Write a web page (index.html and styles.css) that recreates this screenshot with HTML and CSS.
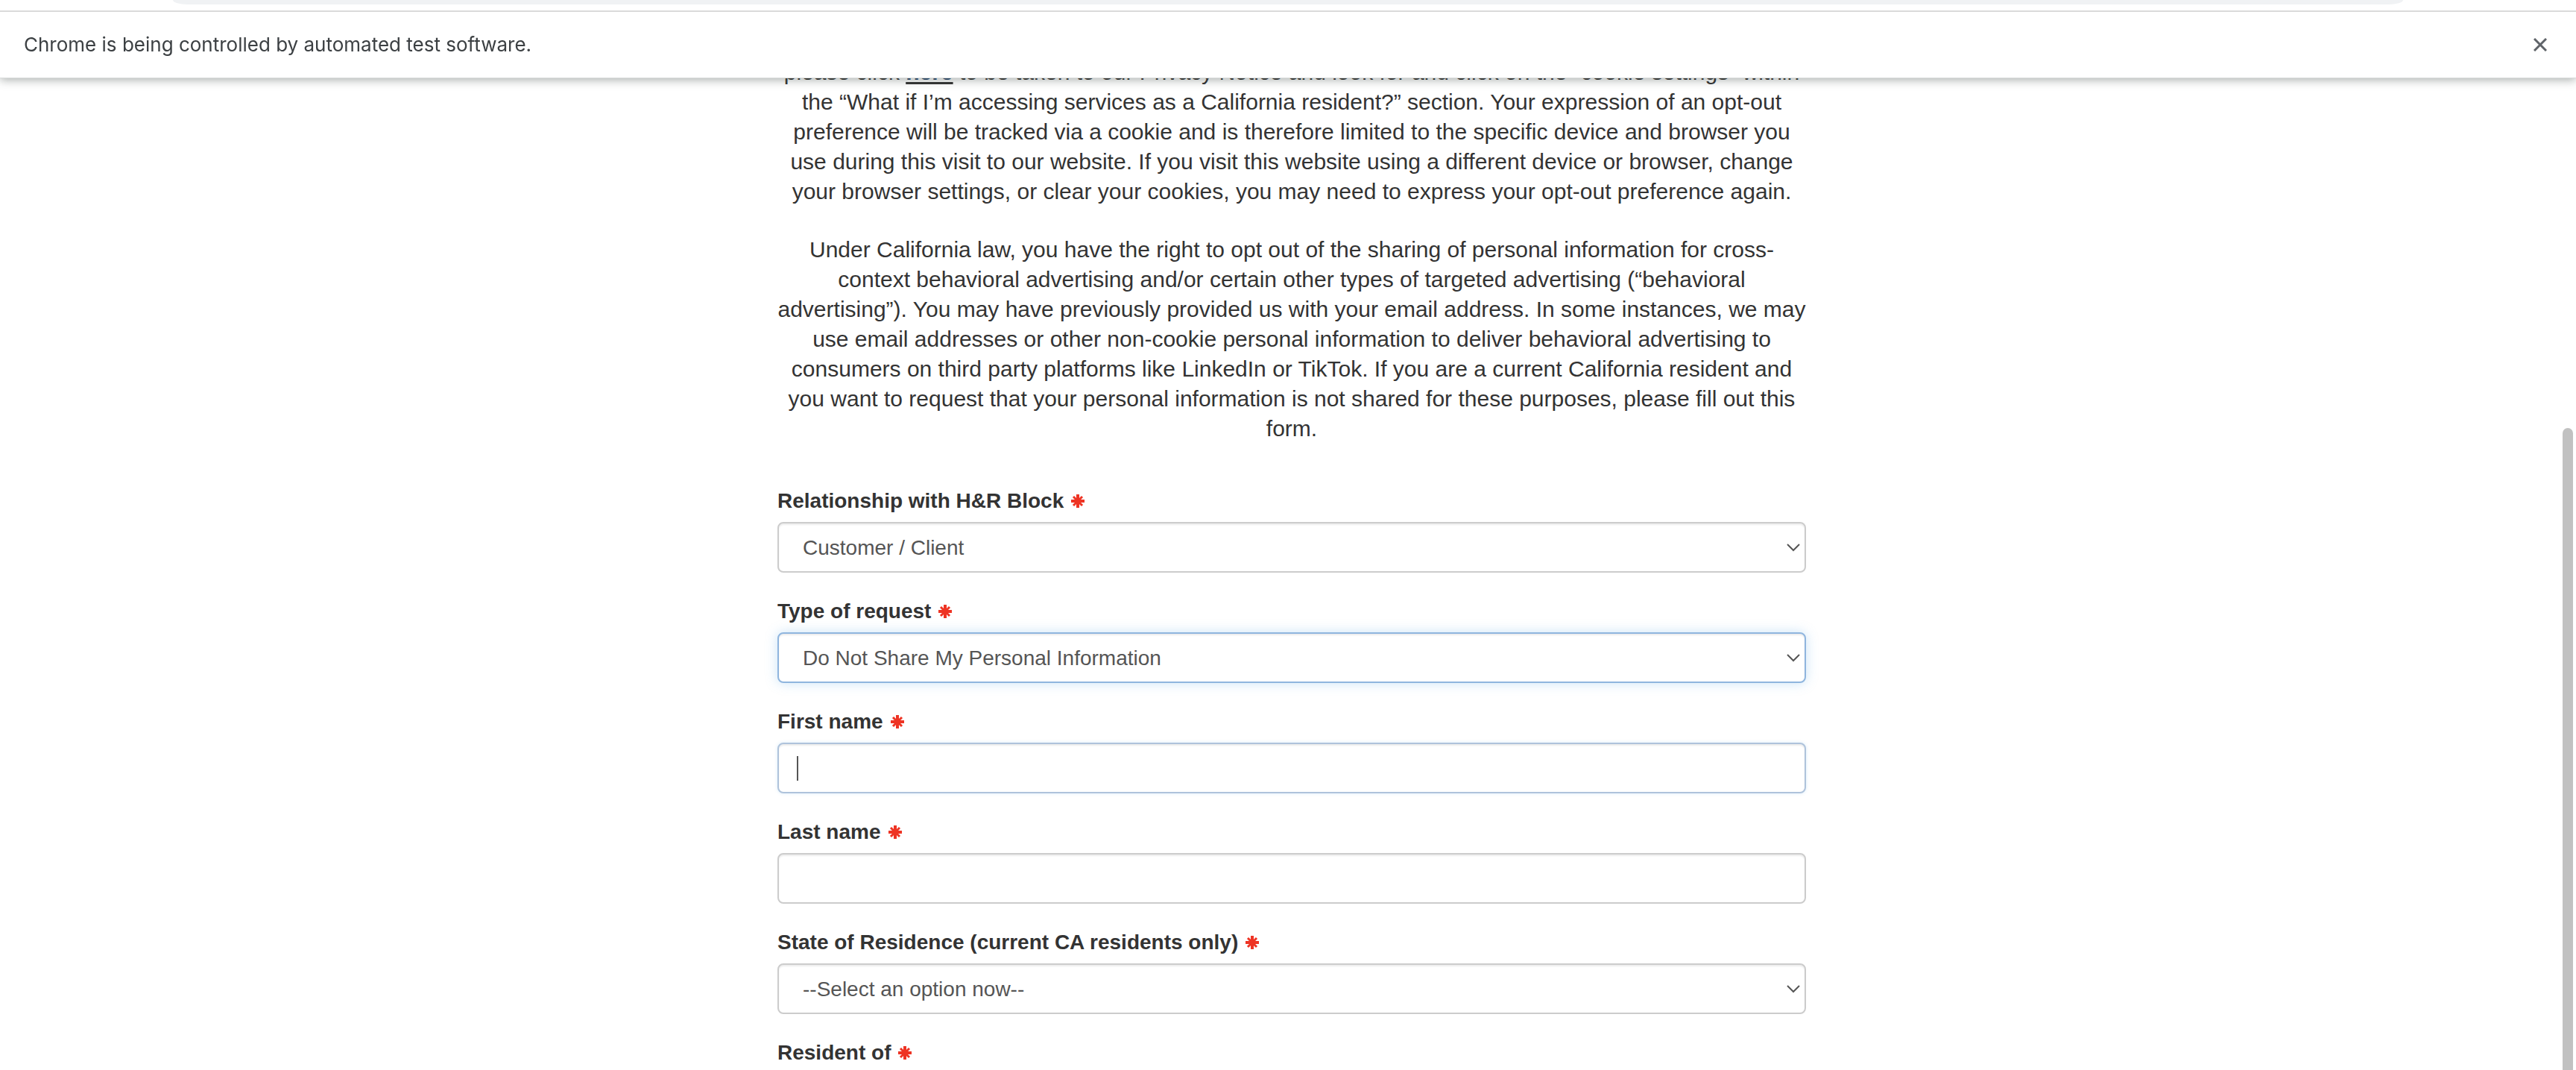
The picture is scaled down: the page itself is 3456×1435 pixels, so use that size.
FILE: index.html
```html
<!DOCTYPE html>
<html lang="en">
<head>
<meta charset="utf-8">
<title>Privacy request</title>
<link rel="stylesheet" href="styles.css">
</head>
<body>
<svg class="symbols" aria-hidden="true">
  <symbol id="required" viewBox="0 0 18 18">
    <path d="M9 0V18M0 9H18" fill="none" stroke="#ee3424" stroke-width="4"/>
    <path d="M3 3L15 15M15 3L3 15" fill="none" stroke="#ee3424" stroke-width="3"/>
  </symbol>
  <symbol id="chevron" viewBox="0 0 18 11">
    <path d="M1 1L9 9L17 1" fill="none" stroke="#555" stroke-width="2"/>
  </symbol>
</svg>
<header class="browser">
  <div class="toolbar"><div class="address"></div></div>
  <div class="infobar">
    <span>Chrome is being controlled by automated test software.</span>
    <button class="close" type="button" aria-label="Close">
      <svg width="18" height="18" viewBox="0 0 18 18"><path d="M1 1L17 17M17 1L1 17" fill="none" stroke="#5f6368" stroke-width="3"/></svg>
    </button>
  </div>
</header>
<main class="page">
  <div class="content">
    <p>please click <a class="link" href="#notice">here</a> to be taken to our Privacy Notice and look for and click on the “cookie settings” within<br>the “What if I’m accessing services as a California resident?” section. Your expression of an opt-out<br>preference will be tracked via a cookie and is therefore limited to the specific device and browser you<br>use during this visit to our website. If you visit this website using a different device or browser, change<br>your browser settings, or clear your cookies, you may need to express your opt-out preference again.</p>
    <p>Under California law, you have the right to opt out of the sharing of personal information for cross-<br>context behavioral advertising and/or certain other types of targeted advertising (“behavioral<br>advertising”). You may have previously provided us with your email address. In some instances, we may<br>use email addresses or other non-cookie personal information to deliver behavioral advertising to<br>consumers on third party platforms like LinkedIn or TikTok. If you are a current California resident and<br>you want to request that your personal information is not shared for these purposes, please fill out this<br>form.</p>
    <form class="form">
      <div class="field">
        <label for="relationship">Relationship with H&amp;R Block <svg class="required"><use href="#required"/></svg></label>
        <div class="select">
          <select class="control" id="relationship"><option>Customer / Client</option></select>
          <svg class="chevron"><use href="#chevron"/></svg>
        </div>
      </div>
      <div class="field">
        <label for="request">Type of request <svg class="required"><use href="#required"/></svg></label>
        <div class="select">
          <select class="control control-active" id="request"><option>Do Not Share My Personal Information</option></select>
          <svg class="chevron"><use href="#chevron"/></svg>
        </div>
      </div>
      <div class="field">
        <label for="first">First name <svg class="required"><use href="#required"/></svg></label>
        <input class="control control-caret" id="first" type="text">
      </div>
      <div class="field">
        <label for="last">Last name <svg class="required"><use href="#required"/></svg></label>
        <input class="control" id="last" type="text">
      </div>
      <div class="field">
        <label for="state">State of Residence (current CA residents only) <svg class="required"><use href="#required"/></svg></label>
        <div class="select">
          <select class="control" id="state"><option>--Select an option now--</option></select>
          <svg class="chevron"><use href="#chevron"/></svg>
        </div>
      </div>
      <div class="field">
        <label for="resident">Resident of <svg class="required"><use href="#required"/></svg></label>
        <input class="control" id="resident" type="text">
      </div>
    </form>
  </div>
</main>
<div class="scroll-thumb"></div>
</body>
</html>
```
FILE: styles.css
```css
* { box-sizing: border-box; }

body {
  margin: 0;
  height: 100vh;
  overflow: hidden;
  background: #fff;
  color: #333;
  font-family: "Helvetica Neue", Helvetica, "Liberation Sans", Arial, sans-serif;
}

.symbols { display: none; }

.browser {
  position: sticky;
  top: 0;
  z-index: 1;
  background: #fff;
  border-bottom: 1px solid #dadcdc;
  box-shadow: 0 2px 12px rgba(60, 70, 66, 0.45);
}

.toolbar {
  height: 16px;
  padding: 0 232px;
  border-bottom: 2px solid #dadada;
}

.address {
  height: 6px;
  background: #f0f2f4;
  border-radius: 0 0 20px 20px / 0 0 6px 6px;
}

.infobar {
  display: flex;
  align-items: center;
  justify-content: space-between;
  height: 88px;
  padding: 0 32px;
  color: #3c4043;
  font: 26px/32px Inter, sans-serif;
}

.close {
  display: flex;
  padding: 7px;
  border: 0;
  background: none;
}

.page {
  margin-top: -28px;
  padding-left: 10px;
}

.content {
  max-width: 1380px;
  margin: 0 auto;
}

.content p {
  margin: 0 0 38px;
  font-size: 30px;
  line-height: 40px;
  text-align: center;
  white-space: nowrap;
}

.link {
  color: #2b4b72;
  font-weight: bold;
  text-decoration: underline 3px #333;
  text-underline-offset: 3px;
}

.form {
  display: grid;
  gap: 32px;
  padding-top: 19px;
}

.field label {
  display: flex;
  align-items: center;
  gap: 10px;
  height: 40px;
  margin-bottom: 8px;
  font-size: 28px;
  font-weight: bold;
}

.required {
  width: 18px;
  height: 18px;
}

.control {
  display: block;
  width: 100%;
  height: 68px;
  padding: 0 32px;
  appearance: none;
  border: 2px solid #ccc;
  border-radius: 8px;
  box-shadow: inset 0 2px 2px rgba(0, 0, 0, 0.075);
  background-color: #fff;
  color: #555;
  font: inherit;
  font-size: 28px;
}

.control-active {
  border-color: #8fb5de;
  box-shadow: inset 0 2px 2px rgba(0, 0, 0, 0.075), 0 0 16px rgba(102, 175, 233, 0.35);
}

/* The text cursor of the field being edited. */
.control-caret {
  border-color: #afc3db;
  box-shadow: inset 0 2px 2px rgba(0, 0, 0, 0.075), 0 0 4px rgba(102, 175, 233, 0.25);
  background: #fff linear-gradient(#555, #555) no-repeat 24px 16px / 2px 33px;
}

.select { position: relative; }

.chevron {
  position: absolute;
  top: 29px;
  right: 8px;
  width: 18px;
  height: 11px;
  pointer-events: none;
}

.scroll-thumb {
  position: fixed;
  top: 574px;
  right: 4px;
  bottom: 0;
  width: 14px;
  border-radius: 7px 7px 0 0;
  background: #c1c1c1;
}
```
